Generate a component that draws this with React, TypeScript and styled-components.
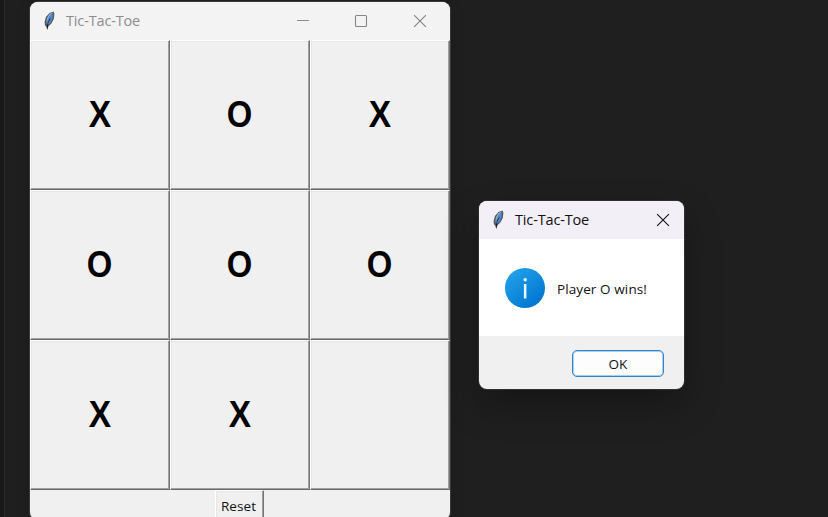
import React from "react";
import styled, { createGlobalStyle } from "styled-components";

const GlobalStyle = createGlobalStyle`
  * { box-sizing: border-box; }
  body { margin: 0; overflow: hidden; background: #1f1f1f; }
  button { margin: 0; padding: 0; font: inherit; color: inherit; }
`;

const Desktop = styled.main`
  position: relative;
  width: 828px;
  height: 517px;
  overflow: hidden;
  background: #1f1f1f;
  border-left: 4px solid #191919;
  font-family: "Open Sans", "Noto Sans", sans-serif;

  &::before {
    content: "";
    display: block;
    width: 1px;
    height: 100%;
    background: #2b2b2b;
  }
`;

const Window = styled.section<{ $x: number; $y: number; $w: number; $h: number; $active?: boolean }>`
  position: absolute;
  left: ${(p) => p.$x - 4}px;
  top: ${(p) => p.$y}px;
  width: ${(p) => p.$w}px;
  height: ${(p) => p.$h}px;
  display: flex;
  flex-direction: column;
  border-radius: 8px;
  overflow: hidden;
  background: #f0f0f0;
  box-shadow: 0 0 0 1px ${(p) => (p.$active ? "#303030" : "#3a3a3a")},
    ${(p) => (p.$active ? "0 16px 36px rgba(0, 0, 0, 0.3)" : "0 6px 16px rgba(0, 0, 0, 0.18)")};
`;

const TitleBar = styled.header<{ $active?: boolean }>`
  display: flex;
  align-items: center;
  flex: none;
  height: 38px;
  padding-left: 12px;
  background: ${(p) => (p.$active ? "#f3eff7" : "#f3f3f3")};
  color: ${(p) => (p.$active ? "#111" : "#8c8c8c")};
`;

const Title = styled.h1`
  flex: 1;
  margin: 0 0 0 9px;
  font-size: 14.5px;
  font-weight: 400;
  line-height: 20px;
  letter-spacing: -0.15px;
`;

const Caption = styled.button<{ $w: number }>`
  display: grid;
  place-items: center;
  width: ${(p) => p.$w}px;
  height: 38px;
  border: 0;
  background: none;
`;

const Board = styled.div`
  display: grid;
  grid-template-columns: repeat(3, 140px);
  grid-auto-rows: 150px;
`;

const Raised = styled.button`
  border: 1px solid;
  border-color: #fff #747474 #696969 #fff;
  box-shadow: inset -1px -1px #a0a0a0, inset 1px 1px #e6e6e6;
  background: #f0f0f0;
`;

const Cell = styled(Raised)`
  color: #000;
  font: bold 36px/40px "Liberation Sans", Arial, sans-serif;
`;

const Mark = styled.span<{ $letter: string }>`
  display: block;
  padding-right: ${(p) => (p.$letter === "O" ? 1 : 0)}px;
  transform: scaleX(${(p) => (p.$letter === "O" ? 0.91 : 0.93)});
`;

const ResetRow = styled.div`
  display: flex;
  justify-content: center;
`;

const Reset = styled(Raised)`
  width: 49px;
  height: 32px;
  margin-left: -2px;
  padding-right: 1px;
  color: #111;
  font-size: 13.5px;
  letter-spacing: 0.1px;
`;

const Message = styled.div`
  display: flex;
  align-items: center;
  gap: 12px;
  height: 97px;
  padding: 1px 0 0 26px;
  background: #fff;
  color: #111;
`;

const MessageText = styled.span`
  padding-top: 1px;
  font-size: 13.5px;
  letter-spacing: 0.1px;
`;

const Footer = styled.footer`
  display: flex;
  justify-content: flex-end;
  flex: 1;
  padding: 14px 20px 0 0;
`;

const OkButton = styled.button`
  width: 92px;
  height: 27px;
  && { color: #111; }
  border: 1px solid #2f86cf;
  border-radius: 5px;
  background: #fdfdfd;
  box-shadow: inset 0 0 0 1px #a9d0ee;
  font-size: 13.5px;
`;

const Feather = () => (
  <svg width="15" height="22" viewBox="0 0 15 22">
    <path d="M11.7 1.4 12.4 4l-.6 5-2.4 4.5-2.9 2.7L5.3 20l-1-3.2-1.4-1.5-.3-3.3 1.3-5 3.6-4Z" fill="#57575a" />
    <path d="M10.9 2.4 10.7 8l-2 4.8-3 2.3-1.4-1.5.6-5L7.6 4Z" fill="#4b88cf" />
    <path d="M10.8 2.3 7.3 4.4 5.2 8l-1 5 1-2.2 2.1-4.6Z" fill="#a5b3c0" />
    <path d="M8 8 5.8 12.4l-1 4.6.5 2.6L6.3 15l-.2-1.8 2.4-4.6Z" fill="#131920" />
  </svg>
);

const CloseIcon = ({ color }: { color: string }) => (
  <svg width="14" height="14" viewBox="0 0 14 14" fill="none" stroke={color} strokeWidth="1.1">
    <path d="m1.1 1.1 11.8 11.8M12.9 1.1 1.1 12.9" />
  </svg>
);

const InfoIcon = () => (
  <svg width="40" height="40" viewBox="0 0 40 40">
    <defs>
      <linearGradient id="info" x1="0.15" y1="0.1" x2="0.85" y2="0.95">
        <stop offset="0" stopColor="#20a0e8" />
        <stop offset="1" stopColor="#0073d1" />
      </linearGradient>
    </defs>
    <circle cx="20" cy="20" r="20" fill="url(#info)" />
    <circle cx="20.2" cy="11.8" r="1.7" fill="#e9f7ff" />
    <path d="M18.9 16h2.5v14.6h-2.5Z" fill="#e9f7ff" />
  </svg>
);

const marks = ["X", "O", "X", "O", "O", "O", "X", "X", ""];

export default function App() {
  return (
    <>
      <GlobalStyle />
      <Desktop>
        <Window $x={30} $y={2} $w={420} $h={518}>
          <TitleBar>
            <Feather />
            <Title>Tic-Tac-Toe</Title>
            <Caption $w={58} aria-label="Minimize">
              <svg width="14" height="14" viewBox="0 0 14 14">
                <path d="M1 6h12v1H1z" fill="#8c8c8c" />
              </svg>
            </Caption>
            <Caption $w={58} aria-label="Maximize">
              <svg width="14" height="14" viewBox="0 0 14 14">
                <rect x="1.5" y="1.5" width="11" height="11" rx="1" fill="none" stroke="#858585" strokeWidth="1.1" />
              </svg>
            </Caption>
            <Caption $w={60} aria-label="Close">
              <CloseIcon color="#808080" />
            </Caption>
          </TitleBar>
          <Board>
            {marks.map((mark, i) => (
              <Cell key={i}>
                <Mark $letter={mark}>{mark}</Mark>
              </Cell>
            ))}
          </Board>
          <ResetRow>
            <Reset>Reset</Reset>
          </ResetRow>
        </Window>
        <Window $x={479} $y={201} $w={205} $h={188} $active>
          <TitleBar $active>
            <Feather />
            <Title>Tic-Tac-Toe</Title>
            <Caption $w={42} aria-label="Close">
              <CloseIcon color="#111" />
            </Caption>
          </TitleBar>
          <Message>
            <InfoIcon />
            <MessageText>Player O wins!</MessageText>
          </Message>
          <Footer>
            <OkButton>OK</OkButton>
          </Footer>
        </Window>
      </Desktop>
    </>
  );
}
